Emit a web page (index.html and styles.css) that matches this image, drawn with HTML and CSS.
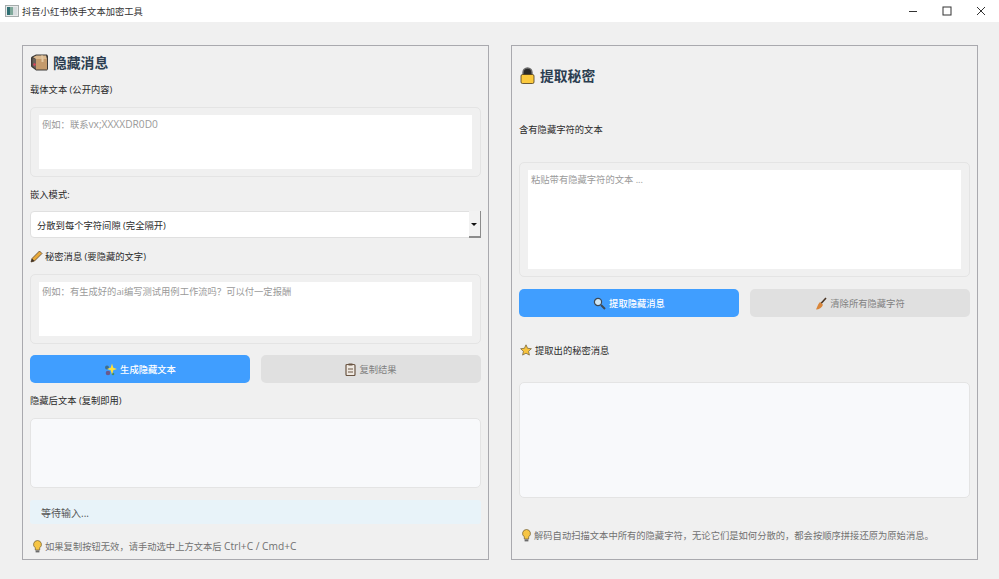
FILE: index.html
```html
<!DOCTYPE html>
<html lang="zh-CN">
<head>
    <meta charset="UTF-8">
    <meta name="viewport" content="width=device-width, initial-scale=1.0">
    <title>抖音小红书快手文本加密工具</title>
    <link rel="stylesheet" href="styles.css">
</head>
<body>
    <div class="titlebar">
        <svg class="app-icon" width="14" height="12" viewBox="0 0 14 12">
            <rect x="0.5" y="0.5" width="13" height="11" fill="#e8eaea" stroke="#a6acac"/>
            <rect x="2" y="2" width="3" height="8" fill="#2f6f73"/>
            <rect x="5" y="2" width="3" height="8" fill="#7fa89a"/>
            <rect x="8" y="2" width="4" height="8" fill="#d6dcde"/>
        </svg>
        <span class="app-title">抖音小红书快手文本加密工具</span>
        <div class="win-controls">
            <svg width="10" height="10" viewBox="0 0 10 10"><path d="M1 5.500h8" stroke="#333" fill="none"/></svg>
            <svg width="10" height="10" viewBox="0 0 10 10"><rect x="1" y="1" width="8" height="8" stroke="#333" fill="none"/></svg>
            <svg width="10" height="10" viewBox="0 0 10 10"><path d="M1 1l8 8M9 1l-8 8" stroke="#333" fill="none"/></svg>
        </div>
    </div>

    <div class="main">
        <div class="panel">
            <div class="heading heading-left">
                <svg width="19" height="17" viewBox="0 0 19 17">
                    <path d="M1 4q0-1 1-1.500L6 .5h11l1 1.500v13l-1 1.500H7q-1 0-1.500-.5L1.500 13q-.5-.5-.5-1z" fill="#3d3a38"/>
                    <path d="M6 5h11v10.500H6z" fill="#c49a6c"/>
                    <path d="M2.500 4L6 5v10L2.500 12z" fill="#6a6058"/>
                    <path d="M3 3.300L6.500 1.500h9.500L17 5H6z" fill="#dcb98e"/>
                    <path d="M11 1.500h2L13.500 5v3h-2V5z" fill="#e3c8a2"/>
                    <circle cx="4.500" cy="10.500" r="1.200" fill="#e0405a"/>
                </svg>
                <span>隐藏消息</span>
            </div>
            <div class="label label-first">载体文本 (公开内容)</div>
            <div class="frame frame-small">
                <div class="input">例如：联系<span class="latin">vx;XXXXDR0D0</span></div>
            </div>
            <div class="label label-mode">嵌入模式:</div>
            <div class="select">
                <span>分散到每个字符间隙 (完全隔开)</span>
                <div class="select-arrow"></div>
            </div>
            <div class="label label-secret">
                <svg width="13" height="13" viewBox="0 0 13 13">
                    <path d="M1 12l1-3.500L9.500 1l2.500 2.500L4.500 11z" fill="#e8a93a" stroke="#5a4630" stroke-width="0.8"/>
                    <path d="M1 12l1-3.500L4.500 11z" fill="#3a3028"/>
                </svg>
                <span>秘密消息 (要隐藏的文字)</span>
            </div>
            <div class="frame frame-small">
                <div class="input">例如：有生成好的ai编写测试用例工作流吗？可以付一定报酬</div>
            </div>
            <div class="btn-row btn-row-left">
                <div class="btn btn-primary">
                    <svg width="13" height="13" viewBox="0 0 13 13">
                        <circle cx="3" cy="4.500" r="2" fill="#3f6f8c"/>
                        <circle cx="4" cy="10" r="2.300" fill="#6a5a8c"/>
                        <circle cx="9" cy="11" r="1.300" fill="#3f8c6a"/>
                        <path d="M8 .5l1.300 4.200L13 6 9.300 7.300 8 11.500 6.700 7.300 3 6l3.700-1.300z" fill="#ffe03a"/>
                    </svg>
                    <span>生成隐藏文本</span>
                </div>
                <div class="btn btn-gray">
                    <svg width="11" height="13" viewBox="0 0 11 13">
                        <rect x="1" y="1.500" width="9" height="11" rx="1" fill="#efe9e2" stroke="#6b5644" stroke-width="1.200"/>
                        <rect x="3.500" y="0.500" width="4" height="2" fill="#6b5644"/>
                        <path d="M3 6h5M3 9h5" stroke="#6b5644"/>
                    </svg>
                    <span>复制结果</span>
                </div>
            </div>
            <div class="label label-result">隐藏后文本 (复制即用)</div>
            <div class="output output-left"></div>
            <div class="status">等待输入...</div>
            <div class="hint hint-left">
                <svg width="9" height="13" viewBox="0 0 9 13">
                    <path d="M4.500 0.500a4 4 0 0 1 2.200 7.300V10H2.300V7.800A4 4 0 0 1 4.500 0.500z" fill="#f6c544" stroke="#6b5a34" stroke-width="0.700"/>
                    <rect x="2.600" y="10.400" width="3.800" height="2" fill="#6b6b6b"/>
                </svg>
                <span>如果复制按钮无效，请手动选中上方文本后 <span class="latin">Ctrl+C / Cmd+C</span></span>
            </div>
        </div>

        <div class="panel">
            <div class="heading heading-right">
                <svg width="15" height="17" viewBox="0 0 15 17">
                    <path d="M3 8V5.500a4.500 4.500 0 0 1 9 0V8" fill="#2a2a2a" stroke="#6a6a6a" stroke-width="1.400"/>
                    <rect x="1" y="7.500" width="13" height="9" rx="1.500" fill="#fbc93d" stroke="#4a3a1a" stroke-width="0.800"/>
                </svg>
                <span>提取秘密</span>
            </div>
            <div class="label label-carrier">含有隐藏字符的文本</div>
            <div class="frame frame-large">
                <div class="input">粘贴带有隐藏字符的文本 ...</div>
            </div>
            <div class="btn-row btn-row-right">
                <div class="btn btn-primary">
                    <svg width="13" height="13" viewBox="0 0 13 13">
                        <circle cx="5" cy="5" r="3.600" fill="#cfe6f5" stroke="#3f4a55" stroke-width="1.200"/>
                        <path d="M8 8l4 4" stroke="#3f4a55" stroke-width="2"/>
                    </svg>
                    <span>提取隐藏消息</span>
                </div>
                <div class="btn btn-gray">
                    <svg width="12" height="13" viewBox="0 0 12 13">
                        <path d="M11 1L6 6.500" stroke="#4a3524" stroke-width="1.600"/>
                        <path d="M5 5l3 2.700C7 10.500 4 12.500 1 12.500c1-1.500 1.500-5 4-7.500z" fill="#d9863a"/>
                    </svg>
                    <span>清除所有隐藏字符</span>
                </div>
            </div>
            <div class="label label-star">
                <svg width="12" height="12" viewBox="0 0 12 12">
                    <path d="M6 .8l1.600 3.500 3.800.4-2.800 2.600.8 3.800L6 9.200l-3.400 1.900.8-3.800L.6 4.700l3.800-.4z" fill="#f8c33c" stroke="#6b5a34" stroke-width="0.700"/>
                </svg>
                <span>提取出的秘密消息</span>
            </div>
            <div class="output output-right"></div>
            <div class="hint hint-right">
                <svg width="9" height="13" viewBox="0 0 9 13">
                    <path d="M4.500 0.500a4 4 0 0 1 2.200 7.300V10H2.300V7.800A4 4 0 0 1 4.500 0.500z" fill="#f6c544" stroke="#6b5a34" stroke-width="0.700"/>
                    <rect x="2.600" y="10.400" width="3.800" height="2" fill="#6b6b6b"/>
                </svg>
                <span>解码自动扫描文本中所有的隐藏字符，无论它们是如何分散的，都会按顺序拼接还原为原始消息。</span>
            </div>
        </div>
    </div>
</body>
</html>
```

FILE: styles.css
```css
* {
    box-sizing: border-box;
}

body {
    margin: 0;
    height: 579px;
    overflow: hidden;
    background: #f0f0f0;
    font-family: "Open Sans", "Noto Sans CJK SC", sans-serif;
    font-size: 9.3px;
    color: #2a2a2a;
}

.latin {
    font-size: 10.2px;
}

.titlebar {
    display: flex;
    align-items: center;
    height: 22px;
    padding-left: 5px;
    background: #fff;
}

.app-icon {
    margin-right: 3px;
}

.app-title {
    color: #333;
}

.win-controls {
    display: flex;
    gap: 24px;
    margin-left: auto;
    padding-right: 13px;
}

.main {
    display: flex;
    justify-content: space-between;
    padding: 23px 21px 0 22px;
}

.panel {
    display: flex;
    flex-direction: column;
    width: 467px;
    height: 515px;
    padding: 0 7px;
    border: 1px solid #a9a9ae;
}

.heading {
    display: flex;
    align-items: center;
    font-size: 13.8px;
    font-weight: bold;
    color: #2c3e50;
}

.heading-left {
    gap: 4px;
    height: 20px;
    margin-top: 6px;
}

.heading-right {
    gap: 5px;
    height: 20px;
    margin-top: 19px;
    padding-left: 1px;
}

.label {
    display: flex;
    align-items: center;
    gap: 2px;
    height: 14px;
}

.label-first {
    margin-top: 10px;
}

.label-mode {
    margin-top: 10px;
}

.label-secret {
    margin-top: 11px;
}

.label-result {
    margin-top: 10px;
}

.label-carrier {
    margin-top: 37px;
}

.label-star {
    gap: 3px;
    margin-top: 26px;
    padding-left: 1px;
}

.frame {
    padding: 7px 8px;
    border: 1px solid #e4e4e4;
    border-radius: 5px;
}

.frame-small {
    height: 70px;
    margin-top: 11px;
}

.frame-large {
    height: 115px;
    margin-top: 26px;
}

.input {
    height: 100%;
    padding: 2px 3px;
    background: #fff;
    color: #9a9a9a;
}

.select {
    display: flex;
    align-items: center;
    justify-content: space-between;
    height: 27px;
    margin-top: 10px;
    padding-left: 6px;
    background: #fff;
    border: 1px solid #e0e0e0;
    border-radius: 4px 0 0 4px;
}

.select-arrow {
    position: relative;
    width: 12px;
    height: 27px;
    margin: -1px -1px -1px 0;
    background: #f2f2f2;
    border-right: 1px solid #8c8c8c;
    border-bottom: 2px solid #8c8c8c;
}

.select-arrow::after {
    content: "";
    position: absolute;
    top: 12px;
    left: 2px;
    border-left: 3.5px solid transparent;
    border-right: 3.5px solid transparent;
    border-top: 3.5px solid #111;
}

.btn-row {
    display: flex;
    gap: 11px;
}

.btn-row-left {
    margin-top: 11px;
}

.btn-row-right {
    margin-top: 12px;
}

.btn {
    display: flex;
    flex: 1;
    align-items: center;
    justify-content: center;
    gap: 3px;
    height: 28px;
    border-radius: 5px;
}

.btn-primary {
    background: #409eff;
    color: #fff;
    font-weight: 500;
}

.btn-gray {
    background: #e0e0e0;
    color: #808080;
}

.output {
    background: #f8f9fb;
    border: 1px solid #e4e4e4;
    border-radius: 5px;
}

.output-left {
    height: 70px;
    margin-top: 11px;
}

.output-right {
    height: 116px;
    margin-top: 25px;
}

.status {
    display: flex;
    align-items: center;
    height: 24px;
    margin-top: 12px;
    padding-left: 11px;
    font-size: 10px;
    color: #555;
    background: #e8f3f9;
    border-radius: 3px;
}

.hint {
    display: flex;
    align-items: center;
    gap: 3px;
    color: #707070;
}

.hint-left {
    margin-top: 15px;
    padding-left: 3px;
}

.hint-right {
    margin-top: 30px;
    padding-left: 3px;
}
```
